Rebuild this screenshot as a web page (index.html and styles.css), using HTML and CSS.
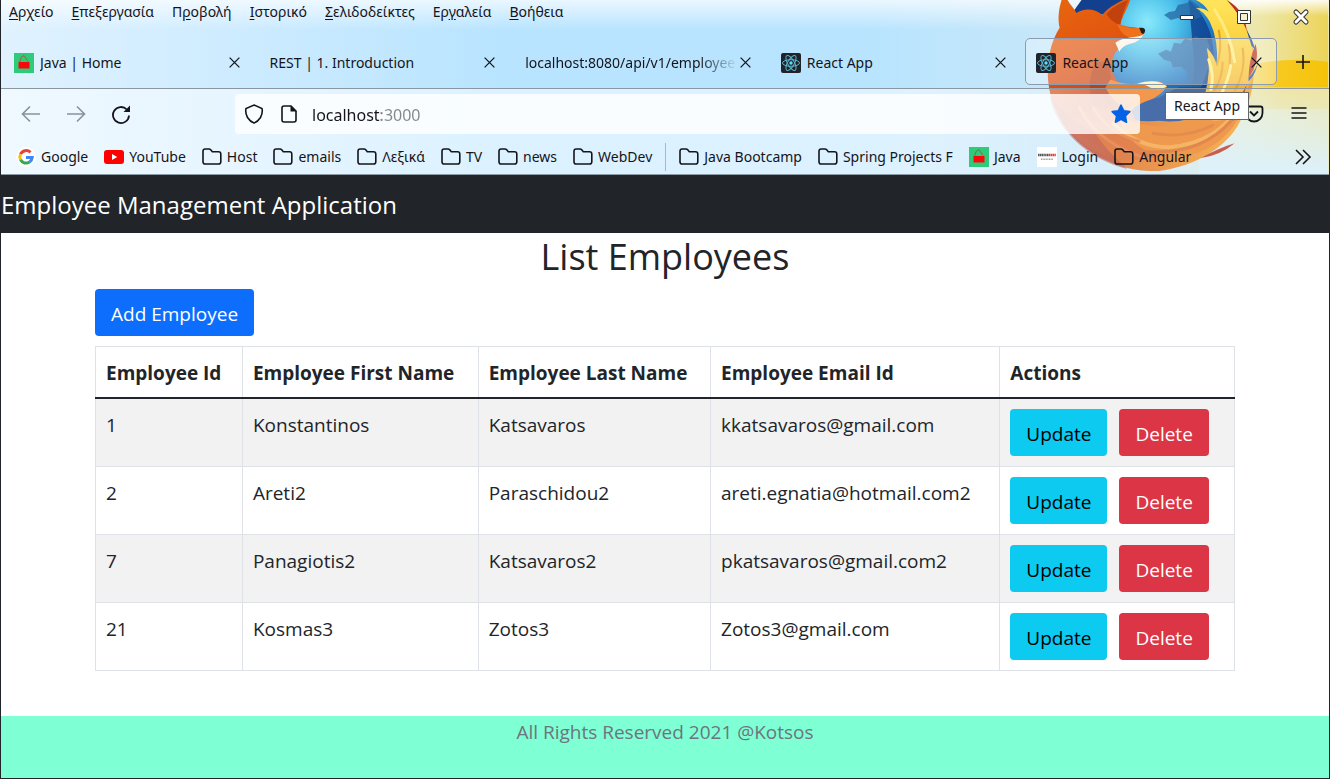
FILE: index.html
```html
<!DOCTYPE html>
<html lang="el">
<head>
<meta charset="utf-8">
<meta name="viewport" content="width=device-width, initial-scale=1">
<title>React App</title>
<link rel="stylesheet" href="styles.css">
</head>
<body>
<svg class="defs" aria-hidden="true">
  <symbol id="close" viewBox="0 0 12 12"><path d="M1.5 1.5l9 9M10.5 1.5l-9 9" fill="none" stroke="currentColor" stroke-width="1.2"/></symbol>
  <symbol id="folder" viewBox="0 0 20 20"><path d="M1 15V4.200Q1 2 3.200 2H7q1 0 1.700.8L10.300 4.800H16.500Q18.800 4.800 18.800 7V14.700Q18.800 17 16.500 17H3.200Q1 17 1 14.700Z" fill="none" stroke="currentColor" stroke-width="1.6"/></symbol>
  <symbol id="bag" viewBox="0 0 20 20"><path fill="#2ecc7a" d="M0 0h20v20H0z"/><path d="M5.500 10L7 4.500L10 2.500L14 8.500" fill="none" stroke="#8a6a3c" stroke-width="1"/><path fill="#f80808" d="M4.500 9h11v6.500h-11z"/></symbol>
  <symbol id="react" viewBox="0 0 20 20"><rect width="20" height="20" rx="2" fill="#20232a"/><g fill="none" stroke="#5ab6cf" stroke-width="1"><ellipse cx="10" cy="10" rx="8.500" ry="3.300"/><ellipse cx="10" cy="10" rx="8.500" ry="3.300" transform="rotate(60 10 10)"/><ellipse cx="10" cy="10" rx="8.500" ry="3.300" transform="rotate(120 10 10)"/></g><circle cx="10" cy="10" r="1.700" fill="#61dafb"/></symbol>
</svg>
<div class="window">
  <header class="browser">
    <svg class="persona" viewBox="0 0 320 175" aria-hidden="true">
      <defs>
        <radialGradient id="globe" gradientUnits="userSpaceOnUse" cx="138" cy="22" r="105"><stop offset="0" stop-color="#8be9fb"/><stop offset=".3" stop-color="#4bc0ea"/><stop offset=".6" stop-color="#2079c4"/><stop offset="1" stop-color="#0c3c8c"/></radialGradient>
        <linearGradient id="fur" x1="0" y1="0" x2=".3" y2="1"><stop offset="0" stop-color="#e8670f"/><stop offset=".35" stop-color="#e2560f"/><stop offset=".7" stop-color="#cb451b"/><stop offset="1" stop-color="#d9601c"/></linearGradient>
        <linearGradient id="coat" gradientUnits="userSpaceOnUse" x1="60" y1="100" x2="225" y2="120"><stop offset="0" stop-color="#b83a20"/><stop offset=".45" stop-color="#e0701c"/><stop offset="1" stop-color="#f09a26"/></linearGradient>
        <linearGradient id="flame" x1="0" y1="0" x2="0" y2="1"><stop offset="0" stop-color="#ffe55c"/><stop offset=".55" stop-color="#f8c62e"/><stop offset="1" stop-color="#f0942a"/></linearGradient>
        <linearGradient id="sun" x1="0" y1="0" x2="1" y2="0"><stop offset="0" stop-color="#f5e6a0" stop-opacity="0"/><stop offset=".45" stop-color="#f0e6a0" stop-opacity=".8"/><stop offset="1" stop-color="#ecd458"/></linearGradient>
        <linearGradient id="gold" x1="0" y1="0" x2="1" y2="0"><stop offset="0" stop-color="#fad96a" stop-opacity="0"/><stop offset=".6" stop-color="#f7c920"/><stop offset="1" stop-color="#f5c308"/></linearGradient>
        <linearGradient id="mist" x1="0" y1="0" x2="0" y2="1"><stop offset="0" stop-color="#fff" stop-opacity=".9"/><stop offset="1" stop-color="#fff" stop-opacity="0"/></linearGradient>
        <linearGradient id="fade" x1="0" y1="0" x2="0" y2="1"><stop offset="0" stop-color="#e2eddc" stop-opacity=".6"/><stop offset="1" stop-color="#d2edfb"/></linearGradient>
      </defs>
      <path d="M190 0H320V175H190Z" fill="url(#sun)"/>
      <path d="M200 78Q260 54 320 62V110H200Z" fill="url(#gold)"/>
      <path d="M190 88H320V175H190Z" fill="url(#fade)"/>
      <path d="M190 0H320V16H190Z" fill="url(#mist)"/>
      <path d="M52 40C32 80 42 118 68 142C92 164 122 173 150 172C186 168 224 146 234 116C244 100 248 72 244 46C238 24 230 10 218 0H130Z" fill="url(#coat)"/>
      <circle cx="139" cy="48" r="74" fill="url(#globe)"/>
      <path d="M62 14L72 0H118L96 14Z" fill="#12408e"/>
      <path d="M180 0Q204 22 205 55Q202 92 178 112Q188 78 184 48Z" fill="#0e3f8d" opacity=".8"/>
      <g fill="#2766a4" opacity=".75">
        <path d="M155 15l5-3 6-1 3-6 9-2 4-3 8 6 2 11-8 3-4-2-6 2-5-2-7 2z"/>
        <path d="M149 54l8-4 5 2 3-9 7 1 4-5 8 2 2-5 8 4 3-3 4 10-1 20-7 20-7 3-8-8 0-10-6-5-8 1-2-6-7-2z"/>
      </g>
      <path d="M52 0C49 9 48 19 50 28C36 50 34 84 46 110C60 140 88 158 118 162L150 158C138 140 122 120 120 100C114 92 106 80 101 68C103 56 107 50 113 46C124 43 133 38 136 31C130 27 120 28 111 25C113 16 118 9 121 0L114 0C106 4 98 8 93 15C85 8 74 8 67 13C64 8 60 4 58 0Z" fill="url(#fur)"/>
      <path d="M119 0Q112 16 111 25Q103 23 97 14Q106 4 119 0Z" fill="#c2420f"/>
      <path d="M108 24Q120 30 134 28L136 31Q134 37 126 38Q113 39 108 24Z" fill="#f0711c"/>
      <path d="M106 43C114 37 128 38 134 35Q131 42 121 44Q113 46 110 52Q108 47 106 43Z" fill="#fff2e5"/>
      <path d="M130 28Q136 27 136 31Q135 36 132 33Z" fill="#251d1b"/>
      <path d="M86 62Q76 84 84 106L120 112Q100 92 100 62Z" fill="#ae3a16" opacity=".6"/>
      <path d="M101 80Q118 87 136 83Q152 79 158 87Q152 96 140 101Q126 107 121 112Q104 104 96 88Z" fill="#f07a1c"/>
      <path d="M128 84Q148 78 158 87Q150 92 141 88Q136 85 128 84Z" fill="#fff1b3"/>
      <path d="M122 112Q128 103 150 98Q160 92 170 88L205 88Q200 110 184 119Q150 128 122 112Z" fill="#154592"/>
      <path d="M40 96C46 130 78 160 118 170Q96 150 84 132Q58 120 40 96Z" fill="#a8322a" opacity=".55"/>
      <path d="M108 112C120 126 150 132 176 122C196 114 206 100 206 88L238 92C234 128 206 154 170 158C138 160 112 140 108 112Z" fill="#ea7c1c"/>
      <path d="M187 0H220Q238 22 244 50Q248 78 234 98L238 104Q222 122 204 122Q196 112 202 92L196 96Q203 70 198 48Q206 56 208 66Q210 40 201 22Q196 12 187 8Q196 8 200 12Q196 4 187 0Z" fill="url(#flame)"/>
      <path d="M208 66Q214 48 210 30M226 92Q238 70 234 48M216 90Q224 66 220 44M205 92Q214 78 214 62" fill="none" stroke="#e89e1b" stroke-width="2"/>
      <path d="M206 10Q222 34 226 62M212 96Q220 80 222 66M200 60Q206 76 202 90" fill="none" stroke="#ffec80" stroke-width="3" stroke-linecap="round"/>
      <g fill="none" stroke-linecap="round">
        <path d="M232 104Q210 144 160 148Q128 148 104 124" stroke="#f2a03a" stroke-width="4"/>
        <path d="M222 122Q190 158 132 152" stroke="#d9641c" stroke-width="3"/>
        <path d="M204 126Q176 140 144 134" stroke="#dc6c1c" stroke-width="3"/>
        <path d="M70 108Q88 146 146 162M84 108Q98 134 130 142" stroke="#e07030" stroke-width="3"/>
      </g>
      <path d="M218 0Q236 10 238 30Q231 14 218 0ZM247 44Q252 62 240 78Q240 62 247 44ZM238 86Q234 107 222 118Q229 100 238 86ZM226 144Q212 156 192 159Q209 149 226 144Z" fill="#bb3020"/>
      <path d="M238 30Q244 40 247 50L243 46ZM240 78Q248 70 250 60Q248 74 240 82ZM224 118Q234 108 238 98Q234 112 224 122Z" fill="#1b4f9c"/>
    </svg>
    <div class="title-row">
      <nav class="menu" aria-label="Μενού">
        <button><u>Α</u>ρχείο</button><button><u>Ε</u>πεξεργασία</button><button>Π<u>ρ</u>οβολή</button><button><u>Ι</u>στορικό</button><button><u>Σ</u>ελιδοδείκτες</button><button>Ερ<u>γ</u>αλεία</button><button><u>Β</u>οήθεια</button>
      </nav>
      <div class="controls">
        <button aria-label="Minimize"><svg width="20" height="20"><path d="M3.500 8.500h13v4h-13z" fill="#fff" stroke="#333"/></svg></button>
        <button aria-label="Maximize"><svg width="20" height="20"><path d="M3.500 3.500h13v13h-13z" fill="#fff" stroke="#333"/><path d="M6.500 6.500h7v7h-7z" fill="#f3efcf" stroke="#333"/></svg></button>
        <button aria-label="Close"><svg width="20" height="20"><path d="M5 5l10 10M15 5L5 15" stroke="#333" stroke-width="5" stroke-linecap="round"/><path d="M5 5l10 10M15 5L5 15" stroke="#fff" stroke-width="3" stroke-linecap="round"/></svg></button>
      </div>
    </div>
    <div class="tabs">
      <div class="tab"><svg class="icon"><use href="#bag"/></svg><span class="tab-name">Java | Home</span><button class="tab-close" aria-label="Close tab"><svg><use href="#close"/></svg></button></div>
      <div class="tab"><span class="tab-name">REST | 1. Introduction</span><button class="tab-close" aria-label="Close tab"><svg><use href="#close"/></svg></button></div>
      <div class="tab"><span class="tab-name long">localhost:8080/api/v1/employee</span><button class="tab-close" aria-label="Close tab"><svg><use href="#close"/></svg></button></div>
      <div class="tab"><svg class="icon"><use href="#react"/></svg><span class="tab-name">React App</span><button class="tab-close" aria-label="Close tab"><svg><use href="#close"/></svg></button></div>
      <div class="tab selected"><svg class="icon"><use href="#react"/></svg><span class="tab-name">React App</span><button class="tab-close" aria-label="Close tab"><svg><use href="#close"/></svg></button><span class="tooltip" role="tooltip">React App</span></div>
      <button class="new-tab" aria-label="New tab"><svg width="16" height="16"><path d="M8 1v14M1 8h14" stroke="#15141a" stroke-width="1.6"/></svg></button>
    </div>
    <div class="toolbars">
      <div class="navbar">
        <div class="nav-buttons">
          <button aria-label="Back"><svg class="dim" viewBox="0 0 20 20"><path d="M19 10H2M9 2.500L1.500 10L9 17.500"/></svg></button>
          <button aria-label="Forward"><svg class="dim" viewBox="0 0 20 20"><path d="M1 10H18M11 2.500L18.500 10L11 17.500"/></svg></button>
          <button aria-label="Reload"><svg viewBox="0 0 20 20"><path d="M15.800 5.500A8 8 0 1 0 18 11.500" stroke-width="1.800"/><path d="M19 1.500V8h-6.500z" fill="#15141a" stroke="none"/></svg></button>
        </div>
        <div class="address">
          <svg viewBox="0 0 20 20"><path d="M10 1L18 4.500Q19 9 16.500 13.500Q14 17.500 10 19Q6 17.500 3.500 13.500Q1 9 2 4.500Z"/></svg>
          <svg viewBox="0 0 20 20"><path d="M5 2H12L17 7V16Q17 18 15 18H5Q3 18 3 16V4Q3 2 5 2Z"/><path d="M11.500 1.500V7.500H17.500Z" fill="#15141a" stroke="none"/></svg>
          <input aria-label="Address" value="localhost:3000">
          <svg class="star" viewBox="0 0 20 20"><path d="M10 1.200L12.700 6.800L18.800 7.600L14.400 12L15.500 18.200L10 15.200L4.500 18.200L5.600 12L1.200 7.600L7.300 6.800Z"/></svg>
        </div>
        <div class="nav-buttons end">
          <button aria-label="Pocket"><svg viewBox="0 0 20 20"><path d="M3.500 2.500H16.500Q18.500 2.500 18.500 4.500V9A8.500 8.500 0 0 1 1.500 9V4.500Q1.500 2.500 3.500 2.500Z M6 7.500L10 11.500L14 7.500" stroke-width="1.800"/></svg></button>
          <button aria-label="Menu"><svg viewBox="0 0 20 20"><path d="M2.500 4H17.500M2.500 9H17.500M2.500 14H17.500"/></svg></button>
        </div>
      </div>
      <nav class="bookmarks" aria-label="Bookmarks">
        <a href="#"><svg class="icon" viewBox="0 0 20 20"><circle cx="10" cy="10" r="10" fill="#fff"/><g fill="none" stroke-width="3"><path d="M14.500 5.400A6.200 6.200 0 0 0 4.500 7.200" stroke="#ea4335"/><path d="M4.500 7.200A6.200 6.200 0 0 0 4.500 12.800" stroke="#fbbc05"/><path d="M4.500 12.800A6.200 6.200 0 0 0 13.500 15" stroke="#34a853"/><path d="M13.500 15A6.200 6.200 0 0 0 16.200 10.500H10" stroke="#4285f4"/></g></svg>Google</a>
        <a href="#"><svg class="icon" viewBox="0 0 20 20"><rect y="3" width="20" height="14" rx="3" fill="#f00"/><path d="M8 7v6l5.200-3z" fill="#fff"/></svg>YouTube</a>
        <a href="#"><svg class="icon"><use href="#folder"/></svg>Host</a>
        <a href="#"><svg class="icon"><use href="#folder"/></svg>emails</a>
        <a href="#"><svg class="icon"><use href="#folder"/></svg>Λεξικά</a>
        <a href="#"><svg class="icon"><use href="#folder"/></svg>TV</a>
        <a href="#"><svg class="icon"><use href="#folder"/></svg>news</a>
        <a href="#"><svg class="icon"><use href="#folder"/></svg>WebDev</a>
        <span class="separator"></span>
        <a href="#"><svg class="icon"><use href="#folder"/></svg>Java Bootcamp</a>
        <a href="#"><svg class="icon"><use href="#folder"/></svg>Spring Projects F</a>
        <a href="#"><svg class="icon"><use href="#bag"/></svg>Java</a>
        <a href="#"><svg class="icon" viewBox="0 0 20 20"><path fill="#fff" d="M0 0h20v20H0z"/><path d="M1 8h11" stroke="#555" stroke-width="2.400" stroke-dasharray="1.400 .4"/><path d="M12 8h7" stroke="#e63b2e" stroke-width="2.400" stroke-dasharray="1.400 .4"/><path d="M4 12.300h12" stroke="#999" stroke-width="1.400" stroke-dasharray="1 .6"/></svg>Login</a>
        <a href="#"><svg class="icon"><use href="#folder"/></svg>Angular</a>
        <button class="more" aria-label="More bookmarks"><svg width="18" height="18"><path d="M2 2l7 7-7 7M9 2l7 7-7 7" fill="none" stroke="#15141a" stroke-width="1.600"/></svg></button>
      </nav>
    </div>
  </header>
  <div class="app-bar"><a href="#">Employee Management Application</a></div>
  <main class="container">
    <h1>List Employees</h1>
    <a class="btn primary" href="#">Add Employee</a>
    <table>
      <colgroup><col class="c-id"><col class="c-first"><col class="c-last"><col class="c-mail"><col class="c-act"></colgroup>
      <thead><tr><th>Employee Id</th><th>Employee First Name</th><th>Employee Last Name</th><th>Employee Email Id</th><th>Actions</th></tr></thead>
      <tbody>
        <tr><td>1</td><td>Konstantinos</td><td>Katsavaros</td><td>kkatsavaros@gmail.com</td><td><div class="actions"><a class="btn info" href="#">Update</a><button class="btn danger">Delete</button></div></td></tr>
        <tr><td>2</td><td>Areti2</td><td>Paraschidou2</td><td>areti.egnatia@hotmail.com2</td><td><div class="actions"><a class="btn info" href="#">Update</a><button class="btn danger">Delete</button></div></td></tr>
        <tr><td>7</td><td>Panagiotis2</td><td>Katsavaros2</td><td>pkatsavaros@gmail.com2</td><td><div class="actions"><a class="btn info" href="#">Update</a><button class="btn danger">Delete</button></div></td></tr>
        <tr><td>21</td><td>Kosmas3</td><td>Zotos3</td><td>Zotos3@gmail.com</td><td><div class="actions"><a class="btn info" href="#">Update</a><button class="btn danger">Delete</button></div></td></tr>
      </tbody>
    </table>
  </main>
  <footer>All Rights Reserved 2021 @Kotsos</footer>
</div>
</body>
</html>
```
FILE: styles.css
```css
* { box-sizing: border-box; }
body { margin: 0; background: #fff; color: #212529; font-family: "Open Sans", "Noto Sans", sans-serif; font-size: 19px; line-height: 30px; }
button, input { font: inherit; color: inherit; border: 0; padding: 0; background: none; }
a { color: inherit; text-decoration: none; }
.defs { position: absolute; width: 0; height: 0; }
.window { display: flex; flex-direction: column; min-height: 100vh; border: solid #212529; border-width: 0 1px 1px; }

/* Browser chrome */
.browser { position: relative; font-family: "Noto Sans", sans-serif; font-size: 14px; line-height: 20px; color: #15141a; border-bottom: 1px solid #8d9ba5; background: linear-gradient(180deg, #ffffffb3 0, #ffffff00 30px), linear-gradient(90deg, #e0f2ff 0, #b8e4ff 38%, #b8e4ff 65%, #d0e9f5 88%, #e9e6b5 100%); }
.persona { position: absolute; top: 0; right: 0; width: 320px; height: 100%; }
.title-row, .tabs, .toolbars { position: relative; }
.title-row { display: flex; justify-content: space-between; height: 38px; }
.menu { display: flex; gap: 18px; padding: 2px 8px; align-items: flex-start; }
.menu u { text-underline-offset: 2px; }
.controls { display: flex; gap: 37px; padding: 7px 18px 0 0; align-items: flex-start; }
.controls button { height: 20px; }
.controls svg { display: block; }
.icon { width: 20px; height: 20px; flex: none; }
.tabs { z-index: 2; display: grid; grid-template-columns: repeat(5, minmax(0, 1fr)) 44px; gap: 4px; padding: 0 4px 3px 2px; }
.tab { position: relative; display: flex; align-items: center; gap: 6px; height: 47px; padding: 2px 13px 0 10px; border: 1px solid transparent; border-radius: 5px; }
.tab-name { flex: 1; min-width: 0; overflow: hidden; white-space: nowrap; }
.long { mask-image: linear-gradient(90deg, #000 calc(100% - 40px), transparent); }
.tab:not(:has(.icon)) { gap: 1px; }
.selected { background: #ffffff4d; border-color: #8b9bb0; }
.tab-close { flex: none; }
.tab-close svg { display: block; width: 13px; height: 13px; }
.new-tab svg { display: block; margin: auto; }
.tooltip { position: absolute; top: 53px; right: 27px; padding: 3px 8px; line-height: 20px; background: #fff; border: 1px solid #666; white-space: nowrap; }
.toolbars { border-top: 1px solid #8b969f; background: linear-gradient(90deg, #ffffff80 70%, #ffffff38 84%); }
.navbar { display: flex; align-items: center; height: 49px; padding-top: 1px; }
.nav-buttons { display: flex; gap: 25px; width: 234px; padding-left: 20px; }
.nav-buttons.end { width: 189px; padding: 0 20px 0 0; justify-content: flex-end; }
.navbar svg { display: block; width: 20px; height: 20px; flex: none; fill: none; stroke: #15141a; stroke-width: 1.600; }
.navbar .dim { stroke: #8b9297; }
.address { flex: 1; display: flex; align-items: center; gap: 15px; height: 40px; padding: 0 9px; border-radius: 4px; background: #ffffffcc; }
.address input { flex: 1; min-width: 0; outline: 0; font-size: 16px; line-height: 24px; margin-left: -2px; padding-top: 2px; color: transparent; background: linear-gradient(90deg, #15141a 69px, #858589 69px) text; }
.navbar .star { fill: #0561e5; stroke: #0561e5; stroke-linejoin: round; }
.bookmarks { display: flex; align-items: center; gap: 16px; height: 36px; padding: 2px 17px 0 15px; white-space: nowrap; }
.bookmarks a { display: flex; align-items: center; gap: 5px; }
.separator { width: 1px; height: 28px; background: #aab8c1; margin: 0 -3px; }
.more { margin-left: auto; }
.more svg { display: block; }

/* Application */
.app-bar { padding: 15px 0 13px; background: #212529; color: #fff; font-size: 24px; }
.app-bar a { display: block; }
.container { width: 100%; max-width: 1140px; margin: 0 auto; padding-bottom: 45px; }
h1 { margin: 0 0 8px; font-size: 36px; line-height: 48px; font-weight: 400; text-align: center; }
.btn { display: inline-block; padding: 10px 16px 7px; border-radius: 4px; line-height: 30px; }
.primary { background: #0d6efd; color: #fff; }
.info { background: #0dcaf0; color: #000; }
.danger { background: #dc3545; color: #fff; }
table { width: 100%; margin-top: 10px; table-layout: fixed; border-collapse: collapse; }
th, td { padding: 10px; border: 1px solid #dee2e6; text-align: left; vertical-align: top; white-space: nowrap; }
th, td:not(:last-child) { padding: 11px 10px 9px; }
thead th { border-bottom: 2px solid #212529; font-weight: 700; }
tbody tr:nth-child(odd) { background: #f2f2f2; }
.c-id { width: 12.9%; }
.c-first { width: 20.7%; }
.c-last { width: 20.4%; }
.c-mail { width: 25.4%; }
.c-act { width: 20.6%; }
.actions { display: flex; gap: 12px; }
footer { min-height: 62px; margin-top: auto; padding-top: 1px; background: #7fffd4; color: #6c757d; text-align: center; }
```
